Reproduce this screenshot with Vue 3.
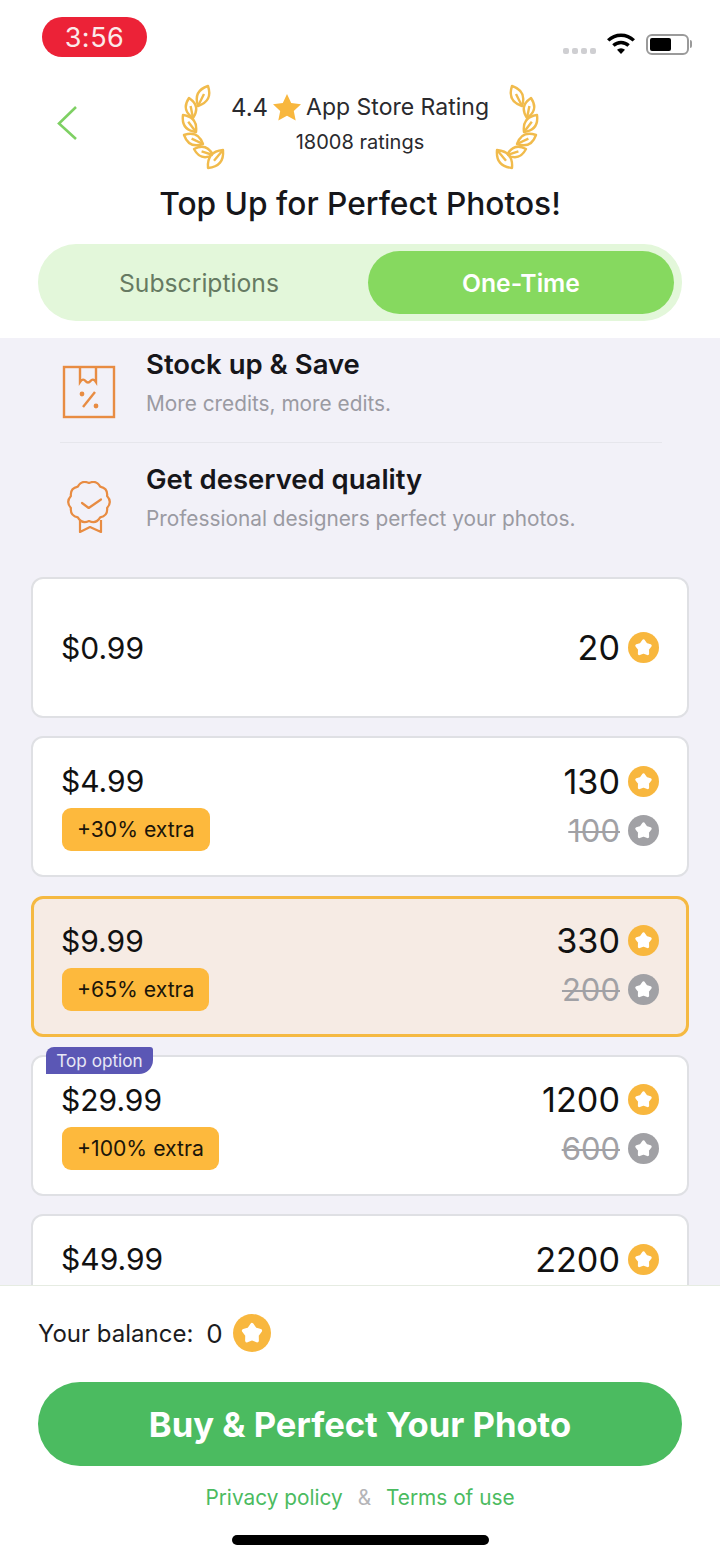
<script setup>
const leaves = [
  [197, 106, 207, 86],
  [192, 118, 188, 98],
  [195, 132, 182, 115],
  [202, 144, 183, 135],
  [212, 155, 193, 149],
  [222, 150, 207, 168],
];

function leafPath([x1, y1, x2, y2]) {
  const mx = (x1 + x2) / 2;
  const my = (y1 + y2) / 2;
  const nx = (y2 - y1) * 0.5;
  const ny = (x1 - x2) * 0.5;
  const a = `${mx + nx} ${my + ny}`;
  const b = `${mx - nx} ${my - ny}`;
  return `M${x1} ${y1}Q${a} ${x2} ${y2}Q${b} ${x1} ${y1}Z`;
}

function veinPath([x1, y1, x2, y2]) {
  const ex = x1 + (x2 - x1) * 0.6;
  const ey = y1 + (y2 - y1) * 0.6;
  return `M${x1} ${y1}L${ex} ${ey}`;
}

function polar(r, deg, cx, cy) {
  const a = (deg * Math.PI) / 180;
  return `${(cx + r * Math.cos(a)).toFixed(1)} ${(cy + r * Math.sin(a)).toFixed(1)}`;
}

// soft five point star used inside the coins
function makeStar() {
  let d = "";
  for (let i = 0; i < 10; i++) {
    const r = i % 2 ? 4.4 : 7.4;
    d += (i ? "L" : "M") + polar(r, -90 + i * 36, 16, 16.4);
  }
  return d + "Z";
}

// scalloped edge of the quality badge
function makeSeal() {
  const n = 10;
  let d = "M" + polar(19, -90, 22, 21);
  for (let i = 0; i < n; i++) {
    const a = -90 + (i * 360) / n;
    d += "Q" + polar(23.5, a + 18, 22, 21) + " " + polar(19, a + 36, 22, 21);
  }
  return d + "Z";
}

const starPath = makeStar();
const sealPath = makeSeal();

const packs = [
  { price: "$0.99", amount: 20, single: true },
  { price: "$4.99", amount: 130, extra: "+30% extra", old: 100 },
  { price: "$9.99", amount: 330, extra: "+65% extra", old: 200, selected: true },
  { price: "$29.99", amount: 1200, extra: "+100% extra", old: 600, top: true },
  { price: "$49.99", amount: 2200 },
];
</script>

<template>
  <div class="page">
    <header class="head">
      <div class="status">
        <span class="time">3:56</span>
        <div class="status-right">
          <span class="dots"><i></i><i></i><i></i><i></i></span>
          <svg class="wifi" width="30" height="22" viewBox="0 0 30 22">
            <path d="M15 21l-4-4.2a5.7 5.7 0 0 1 8 0z" fill="#000" />
            <path d="M7.4 12.6a11 11 0 0 1 15.2 0M2.2 7.4a18.4 18.4 0 0 1 25.6 0" fill="none" stroke="#000" stroke-width="3.4" />
          </svg>
          <span class="battery"><b></b></span>
          <span class="battery-tip"></span>
        </div>
      </div>

      <div class="rating-row">
        <svg class="back" width="22" height="36" viewBox="0 0 22 36">
          <path d="M20 2L3 18.500L20 34" fill="none" stroke="#7ed063" stroke-width="2.600" />
        </svg>
        <svg class="laurel" width="44" height="86" viewBox="180 84 44 86">
          <g fill="#fff" stroke="#f1bb4c" stroke-width="2.400" stroke-linejoin="round">
            <path v-for="(l, i) in leaves" :key="i" :d="leafPath(l)" />
            <path v-for="(l, i) in leaves" :key="'v' + i" :d="veinPath(l)" />
          </g>
        </svg>
        <div class="rating-text">
          <div class="rating-line">
            <span class="rating-num">4.4</span>
            <svg class="rating-star" width="30" height="28" viewBox="0 0 30 28">
              <path d="M15 1l4.200 9 9.800 1.200-7.200 6.700 1.900 9.600L15 22.700l-8.700 4.800 1.900-9.600L1 11.200 10.800 10z" fill="#f8b73e" />
            </svg>
            <span>App Store Rating</span>
          </div>
          <div class="rating-count">18008 ratings</div>
        </div>
        <svg class="laurel flip" width="44" height="86" viewBox="180 84 44 86">
          <g fill="#fff" stroke="#f1bb4c" stroke-width="2.400" stroke-linejoin="round">
            <path v-for="(l, i) in leaves" :key="i" :d="leafPath(l)" />
            <path v-for="(l, i) in leaves" :key="'v' + i" :d="veinPath(l)" />
          </g>
        </svg>
      </div>

      <h1 class="title">Top Up for Perfect Photos!</h1>

      <div class="tabs">
        <div class="tab">Subscriptions</div>
        <div class="tab active">One-Time</div>
      </div>
    </header>

    <main class="scroll">
      <section class="features">
        <div class="feature">
          <div class="feature-icon">
            <svg width="54" height="54" viewBox="0 0 54 54" fill="none" stroke="#e88c42" stroke-width="2.400">
              <rect x="2" y="2" width="50" height="50" />
              <path d="M18 2v15c2-3 4-3 5.500-1 1.500 2 3.500 2 5 0s3.500-2 5.500 1V2" />
              <path d="M33 27L21 42" />
              <circle cx="20" cy="29" r="1.200" fill="#e88c42" />
              <circle cx="34" cy="41" r="1.200" fill="#e88c42" />
            </svg>
          </div>
          <div>
            <h2>Stock up &amp; Save</h2>
            <p>More credits, more edits.</p>
          </div>
        </div>
        <div class="feature second">
          <div class="feature-icon">
            <svg width="46" height="52" viewBox="0 0 46 52" fill="none" stroke="#e88c42" stroke-width="2.200" stroke-linejoin="round">
              <path :d="sealPath" />
              <path d="M15 22l6.700 5L34 18.500" stroke-linecap="round" />
              <path d="M13 40v11l10-5 11 5V39" />
            </svg>
          </div>
          <div>
            <h2>Get deserved quality</h2>
            <p>Professional designers perfect your photos.</p>
          </div>
        </div>
      </section>

      <section class="packs">
        <div
          v-for="p in packs"
          :key="p.price"
          class="pack"
          :class="{ selected: p.selected, single: p.single }"
        >
          <span v-if="p.top" class="top-tag">Top option</span>
          <div class="pack-left">
            <div class="price">{{ p.price }}</div>
            <div v-if="p.extra" class="extra">{{ p.extra }}</div>
          </div>
          <div class="pack-right">
            <div class="amount">
              <span>{{ p.amount }}</span>
              <svg class="coin" width="31" height="31" viewBox="0 0 32 32">
                <circle cx="16" cy="16" r="16" fill="#f8b73e" />
                <path :d="starPath" fill="#fff" stroke="#fff" stroke-width="3" stroke-linejoin="round" />
              </svg>
            </div>
            <div v-if="p.old" class="amount old">
              <span>{{ p.old }}</span>
              <svg class="coin" width="31" height="31" viewBox="0 0 32 32">
                <circle cx="16" cy="16" r="16" fill="#a1a1a5" />
                <path :d="starPath" fill="#fff" stroke="#fff" stroke-width="3" stroke-linejoin="round" />
              </svg>
            </div>
          </div>
        </div>
      </section>
    </main>

    <footer class="foot">
      <div class="balance">
        <span>Your balance:</span>
        <span class="balance-num">0</span>
        <svg width="38" height="38" viewBox="0 0 32 32">
          <circle cx="16" cy="16" r="16" fill="#f8b73e" />
          <path :d="starPath" fill="#fff" stroke="#fff" stroke-width="3" stroke-linejoin="round" />
        </svg>
      </div>
      <button class="buy">Buy &amp; Perfect Your Photo</button>
      <div class="links">
        <a>Privacy policy</a>
        <span>&amp;</span>
        <a>Terms of use</a>
      </div>
      <div class="home-bar"></div>
    </footer>
  </div>
</template>

<style>
html,
body {
  margin: 0;
  background: #fff;
}
</style>

<style scoped>
.page {
  width: 720px;
  height: 1560px;
  display: flex;
  flex-direction: column;
  overflow: hidden;
  background: #fff;
  font-family: Inter, "Liberation Sans", sans-serif;
  color: #16161a;
}

.head {
  height: 338px;
  flex: none;
  box-sizing: border-box;
  padding-top: 17px;
}

.status {
  height: 67px;
  display: flex;
  justify-content: space-between;
  padding: 0 28px 0 42px;
}

.time {
  width: 105px;
  height: 40px;
  border-radius: 20px;
  background: #ec2237;
  color: #fbeaea;
  font-size: 27px;
  line-height: 41px;
  text-align: center;
  letter-spacing: 0.5px;
}

.status-right {
  display: flex;
  align-items: flex-start;
  padding-top: 16px;
}

.dots {
  display: flex;
  gap: 3px;
  margin-top: 15px;
  margin-right: 10px;
}

.dots i {
  width: 6px;
  height: 6px;
  border-radius: 2px;
  background: #cfcfd2;
}

.wifi {
  margin-right: 10px;
}

.battery {
  box-sizing: border-box;
  width: 43px;
  height: 21px;
  margin-top: 1px;
  border: 2px solid #9a9a9a;
  border-radius: 6px;
  padding: 2px;
}

.battery b {
  display: block;
  width: 21px;
  height: 13px;
  background: #000;
  border-radius: 2px;
}

.battery-tip {
  width: 2px;
  height: 8px;
  margin-top: 7px;
  margin-left: 1px;
  background: #9a9a9a;
  border-radius: 0 2px 2px 0;
}

.rating-row {
  position: relative;
  height: 86px;
  display: flex;
  justify-content: center;
  gap: 7px;
}

/* back arrow sits over the centered rating block */
.back {
  position: absolute;
  left: 56px;
  top: 21px;
}

.flip {
  transform: scaleX(-1);
}

.rating-text {
  width: 256px;
  text-align: center;
  white-space: nowrap;
}

.rating-line {
  height: 46px;
  display: flex;
  align-items: center;
  justify-content: center;
  gap: 4px;
  font-size: 23px;
  color: #2a2a2e;
}

.rating-num {
  font-size: 24px;
}

.rating-star {
  flex: none;
}

.rating-count {
  margin-top: -2px;
  font-size: 20px;
  line-height: 28px;
  color: #2a2a2e;
}

.title {
  margin: 14px 0 0;
  font-size: 31.7px;
  line-height: 40px;
  font-weight: 500;
  text-align: center;
}

.tabs {
  box-sizing: border-box;
  margin: 20px 38px 0;
  height: 77px;
  padding: 7px 8px;
  border-radius: 38px;
  background: #e3f7da;
  display: grid;
  grid-template-columns: 306px 306px;
  gap: 16px;
}

.tab {
  display: flex;
  align-items: center;
  justify-content: center;
  font-size: 24.7px;
  color: #667a62;
}

.tab.active {
  background: #86d95f;
  border-radius: 32px;
  color: #fff;
  font-weight: 600;
}

.scroll {
  flex: 1;
  min-height: 0;
  overflow: hidden;
  background: #f2f1f8;
}

.features {
  padding: 0 58px 0 60px;
}

.feature {
  display: flex;
  height: 105px;
  box-sizing: border-box;
  border-bottom: 1px solid #e6e6ec;
}

.feature.second {
  height: 110px;
  padding-top: 10px;
  border-bottom: 0;
}

.feature-icon {
  width: 86px;
  flex: none;
  padding-top: 27px;
  padding-left: 2px;
  box-sizing: border-box;
}

.second .feature-icon {
  padding-top: 28px;
  padding-left: 7px;
}

.feature h2 {
  margin: 7px 0 0;
  font-size: 27.500px;
  line-height: 38px;
  font-weight: 600;
}

.feature p {
  margin: 6px 0 0;
  font-size: 20.800px;
  line-height: 30px;
  color: #9a9aa2;
}

.packs {
  margin-top: 24px;
  padding: 0 31px;
  display: flex;
  flex-direction: column;
  gap: 18.33px;
}

.pack {
  position: relative;
  box-sizing: border-box;
  height: 141px;
  flex: none;
  display: flex;
  justify-content: space-between;
  padding: 26px 28px 0 29px;
  background: #fff;
  border: 2px solid #dfe0e4;
  border-radius: 12px;
}

.pack.single {
  align-items: center;
  padding-top: 0;
}

.pack.selected {
  padding: 25px 27px 0 28px;
  background: #f6ebe4;
  border: 3px solid #f5b942;
}

.top-tag {
  position: absolute;
  left: 13px;
  top: -10px;
  width: 107px;
  height: 27px;
  border-radius: 8px 3px 14px 0;
  background: #5b57b5;
  color: #e8e8f6;
  font-size: 17.200px;
  line-height: 27px;
  text-align: center;
}

.price {
  margin-left: -1px;
  font-size: 30px;
  line-height: 34px;
  color: #111;
}

.extra {
  display: table;
  margin-top: 10px;
  padding: 0 15px;
  height: 43px;
  border-radius: 9px;
  background: #fdb93d;
  font-size: 21.200px;
  line-height: 43px;
  color: #1b1509;
}

.amount {
  height: 34px;
  display: flex;
  align-items: center;
  justify-content: flex-end;
  gap: 8px;
  font-size: 34.200px;
  color: #111;
}

.amount.old {
  margin-top: 15px;
  font-size: 31px;
  color: #a1a1a5;
}

.amount.old span {
  text-decoration: line-through;
  text-decoration-thickness: 2px;
}

.foot {
  height: 275px;
  flex: none;
  box-sizing: border-box;
  border-top: 1px solid #e6ece2;
  background: #fff;
  padding: 28px 38px 0;
  display: flex;
  flex-direction: column;
}

.balance {
  height: 38px;
  display: flex;
  align-items: center;
  font-size: 24px;
  color: #1c1c20;
}

.balance-num {
  margin-left: 13px;
  margin-right: 10px;
  font-size: 26px;
}

.buy {
  margin-top: 30px;
  height: 84px;
  flex: none;
  border: 0;
  border-radius: 42px;
  background: #4bbb60;
  color: #fff;
  font-family: inherit;
  font-size: 34.600px;
  font-weight: 700;
}

.links {
  margin-top: 16px;
  height: 30px;
  display: flex;
  justify-content: center;
  align-items: center;
  gap: 15px;
  font-size: 20.800px;
  color: #4bbb60;
}

.links span {
  color: #b5b5b8;
}

.home-bar {
  align-self: center;
  width: 257px;
  height: 10px;
  margin-top: 23px;
  border-radius: 5px;
  background: #000;
}
</style>
